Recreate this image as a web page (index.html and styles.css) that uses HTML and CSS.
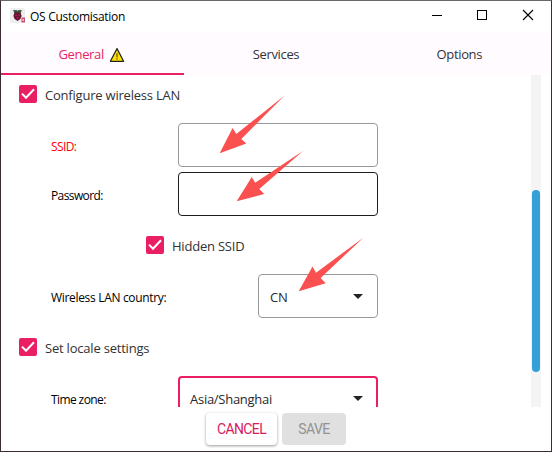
FILE: index.html
```html
<!DOCTYPE html>
<html lang="en">
<head>
<meta charset="utf-8">
<title>OS Customisation</title>
<link rel="stylesheet" href="styles.css">
</head>
<body>
<div class="window">
  <header class="titlebar">
    <svg class="app-icon" width="16" height="16" viewBox="0 0 16 16">
      <rect x="0" y="0" width="15" height="15" rx="2" fill="#eeeeef"/>
      <path d="M3 2.2 6.5 2 7.5 3 8.5 2 12 2.2 10.5 5H4.5Z" fill="#36563a"/>
      <path d="M4.4 4.6H10.6L11.6 8 10.4 11 7.5 13 4.6 11 3.4 8Z" fill="#641334"/>
      <path d="M5 6.5H7V8H5ZM8.2 6.5H10V8H8.2ZM6.5 9H8.5V10.8H6.5Z" fill="#a31d50"/>
      <rect x="11.5" y="9.5" width="3.5" height="5" fill="#c94e70"/>
      <rect x="12.6" y="11" width="1.3" height="2" fill="#f5dbe3"/>
    </svg>
    <span class="title">OS Customisation</span>
    <svg class="controls" width="104" height="12" viewBox="0 0 104 12" fill="none" stroke="#000">
      <path d="M1 6.5H11M46.5 1.5H55.5V10.5H46.5Z" shape-rendering="crispEdges"/>
      <path d="M92 1 102 11M102 1 92 11" stroke-width="1.1"/>
    </svg>
  </header>
  <nav class="tabs">
    <div class="tab active"><span class="t-general">General</span>
      <svg width="16" height="16" viewBox="0 0 16 16">
        <path d="M8 1.6 14.6 14.3H1.4Z" fill="#ffe000" stroke="#222" stroke-width="1.2" stroke-linejoin="round"/>
        <path d="M8 6.3V10.3M8 11.3V12.5" stroke="#514900" stroke-width="1.2"/>
      </svg>
    </div>
    <div class="tab"><span class="t-services">Services</span></div>
    <div class="tab"><span class="t-options">Options</span></div>
  </nav>
  <main class="content">
    <section class="form">
      <div class="check-row first">
        <svg class="checkbox" viewBox="0 0 18 18"><path d="M3 8.6 7 12.7 15 4.2"/></svg>
        <span class="t-configure">Configure wireless LAN</span>
      </div>
      <div class="field-row">
        <span class="label error t-ssid">SSID:</span><div class="input"></div>
      </div>
      <div class="field-row second">
        <span class="label t-password">Password:</span><div class="input hover"></div>
      </div>
      <div class="check-row hidden-ssid">
        <svg class="checkbox" viewBox="0 0 18 18"><path d="M3 8.6 7 12.7 15 4.2"/></svg>
        <span class="t-hidden">Hidden SSID</span>
      </div>
      <div class="field-row country">
        <span class="label t-country">Wireless LAN country:</span>
        <div class="select small"><span class="t-cn">CN</span><i class="caret"></i></div>
      </div>
      <div class="check-row locale">
        <svg class="checkbox" viewBox="0 0 18 18"><path d="M3 8.6 7 12.7 15 4.2"/></svg>
        <span class="t-locale">Set locale settings</span>
      </div>
      <div class="field-row zone">
        <span class="label t-time">Time zone:</span>
        <div class="select focus"><span class="t-asia">Asia/Shanghai</span><i class="caret"></i></div>
      </div>
    </section>
    <div class="scrollbar"><div class="thumb"></div></div>
  </main>
  <footer class="footer">
    <button class="btn cancel">CANCEL</button>
    <button class="btn save" disabled>SAVE</button>
  </footer>
  <svg class="arrows" width="552" height="452" viewBox="0 0 552 452" fill="#fb5050">
    <path d="M284.3 95.8 241.3 139 246.3 143.5 219.7 153.3 232.6 128 236.3 134Z"/>
    <path d="M303.3 150.8 259.3 189 264.2 194 236.7 201.3 251.8 177 255.2 182.7Z"/>
    <path d="M363.3 237.7 320.6 278 325.7 283.3 298.7 291.3 312.5 266.5 316 272.7Z"/>
  </svg>
</div>
</body>
</html>
```

FILE: styles.css
```css
* { box-sizing: border-box; }
body { margin: 0; background: #fff; font-family: "Open Sans", "Noto Sans", sans-serif; }
.window {
  position: relative;
  width: 552px;
  height: 452px;
  border: 1px solid #3c2b30;
  border-top-color: #68686b;
  display: flex;
  flex-direction: column;
  background: #fff;
  overflow: hidden;
}
.titlebar { height: 30px; flex: none; display: flex; align-items: center; padding: 0 16px 0 9px; font-size: 12px; color: #000; }
.app-icon { margin-right: 4px; }
.controls { margin: 0 0 2px auto; }
.title, .tab span, .check-row span, .label, .select span { white-space: nowrap; }
.title { letter-spacing: -.28px; }
.tabs { height: 44px; flex: none; display: grid; grid-template-columns: repeat(3, 1fr); background: #fffbfe; }
.tab { display: flex; align-items: center; justify-content: center; padding-top: 3px; font-size: 13px; letter-spacing: -.35px; color: #333238; border-bottom: 2px solid transparent; }
.tab.active { color: #e91e63; border-color: #e91e63; gap: 5px; padding-right: 2px; }
.tab svg { margin-top: 2px; }
.content { height: 332px; flex: none; display: flex; justify-content: space-between; overflow: hidden; padding-right: 10px; }
.form { width: 377px; padding: 10px 0 0 18px; }
.check-row { height: 18px; display: flex; align-items: center; gap: 8px; font-size: 13px; letter-spacing: -.21px; color: #323232; }
.check-row span { position: relative; top: 1px; }
.checkbox { width: 18px; height: 18px; border-radius: 2px; background: #e91e63; fill: none; stroke: #fff; stroke-width: 2; }
.field-row { height: 44px; margin-top: 20px; display: flex; align-items: center; justify-content: space-between; padding-left: 32px; font-size: 12px; color: #000; }
.field-row.second { margin-top: 5px; }
.label { padding-top: 2px; }
.t-ssid, .t-password, .t-time { letter-spacing: -.6px; }
.t-country { letter-spacing: -.32px; }
.error { color: #f00; }
.input, .select { width: 200px; height: 44px; border: 1px solid #99999b; border-radius: 4px; }
.input.hover { border-color: #1c1b1f; }
.hidden-ssid { margin: 20px 0 0 127px; }
.locale { margin-top: 20px; }
.select { display: flex; align-items: center; justify-content: space-between; padding: 1px 14px 0 11px; font-size: 13px; letter-spacing: -.27px; color: #29282c; }
.select.small { width: 120px; }
.select.focus { border: 2px solid #e91e63; padding: 1px 13px 0 10px; }
.caret { width: 0; height: 0; border: 5px solid transparent; border-top-color: #222; border-bottom: 0; }
.scrollbar { width: 10px; height: 332px; background: #f4f4f4; padding: 115px 1px 0; }
.thumb { height: 182px; border-radius: 4px; background: #349fd9; }
.footer { height: 44px; flex: none; display: flex; justify-content: center; align-items: flex-start; gap: 5px; padding-top: 6px; }
.btn { height: 32px; border: 0; border-radius: 4px; padding: 0; font: 400 14px Roboto, sans-serif; letter-spacing: -.6px; }
.cancel { width: 71px; color: #d81b60; background: #fff; box-shadow: 0 1px 3px rgba(0,0,0,.4); }
.save { width: 64px; color: #929292; background: #e0e0e0; }
.arrows { position: absolute; left: -1px; top: -1px; pointer-events: none; }
```
